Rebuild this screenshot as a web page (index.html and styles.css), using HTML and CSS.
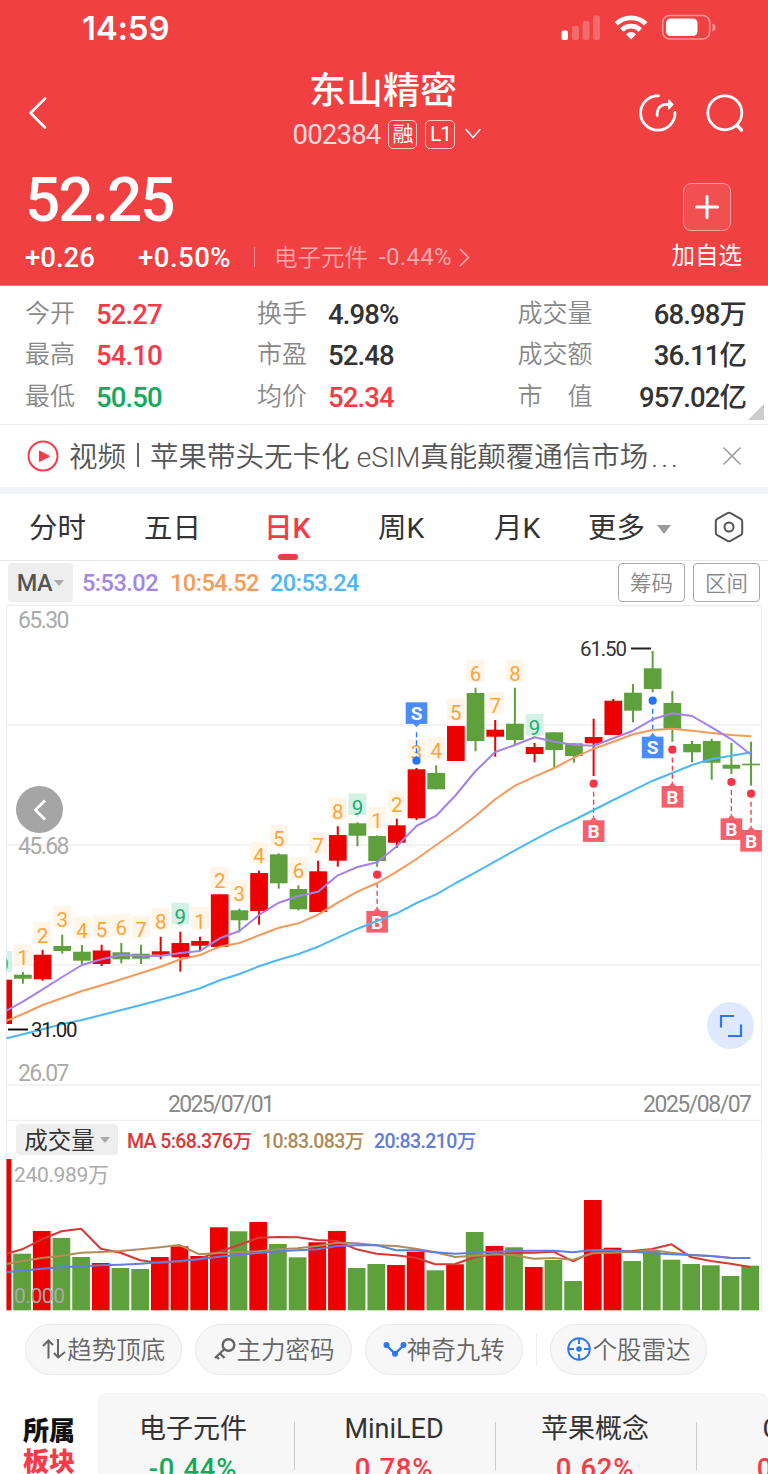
FILE: index.html
```html
<!DOCTYPE html>
<html lang="zh-CN">
<head>
    <meta charset="utf-8">
    <meta name="viewport" content="width=device-width, initial-scale=1.0">

    <title>东山精密 002384</title>

    <link rel="stylesheet" href="styles.css">
</head>
<body>
    <header class="top">
        <div class="status">
            <span class="time">14:59</span>
            <svg class="status-icons" width="156" height="28" viewBox="0 0 156 28">
                <rect x="1.500" y="16.500" width="6.500" height="9.500" rx="2" fill="#fff"/>
                <g fill="#fff" opacity=".22">
                    <rect x="12" y="12" width="7" height="14" rx="2"/>
                    <rect x="22.500" y="7" width="7" height="19" rx="2"/>
                    <rect x="33" y="1.500" width="7" height="24.500" rx="2"/>
                </g>
                <g fill="none" stroke="#fff" stroke-width="4.800">
                    <path d="M56.200 9.700a21.500 21.500 0 0 1 29.600 0"/>
                    <path d="M61.700 16a13.300 13.300 0 0 1 18.600 0"/>
                </g>
                <path d="M71 25.500l-5-5.300a7 7 0 0 1 10 0z" fill="#fff"/>
                <rect x="102.700" y="1.500" width="47" height="23.500" rx="7" fill="none" stroke="#fff" stroke-width="1.600" opacity=".45"/>
                <rect x="106" y="4.500" width="31.500" height="17.500" rx="4.500" fill="#fff"/>
                <path d="M152.500 9.500q3 1 3 4t-3 4z" fill="#fff" opacity=".45"/>
            </svg>
        </div>

        <div class="title-bar">
            <svg class="back" width="20" height="34" viewBox="0 0 20 34" fill="none" stroke="#fff" stroke-width="2.600" stroke-linecap="round" stroke-linejoin="round">
                <path d="M17 2.500L2.500 17 17 31.500"/>
            </svg>
            <div class="title">
                <h1>东山精密</h1>
                <div class="code">
                    <span>002384</span>
                    <b>融</b>
                    <b class="level">L1</b>
                    <svg width="16" height="12" viewBox="0 0 16 12" fill="none" stroke="#fff" stroke-width="1.600" stroke-linecap="round">
                        <path d="M1 1.500l7 8 7-8"/>
                    </svg>
                </div>
            </div>
            <div class="actions">
                <svg width="40" height="40" viewBox="0 0 40 40" fill="none" stroke="#fff" stroke-width="2.800" stroke-linecap="round">
                    <path d="M20.500 2.800A17.200 17.200 0 1 0 37 19.500"/>
                    <path d="M19.200 22.500v-2.500a8.500 8.500 0 0 1 8.500-8.500h5"/>
                    <path d="M30.800 7.300l4 4.200-4 4.200z" fill="#fff" stroke-width="1.500" stroke-linejoin="round"/>
                </svg>
                <svg width="40" height="40" viewBox="0 0 40 40" fill="none" stroke="#fff" stroke-width="2.800" stroke-linecap="round">
                    <circle cx="19.800" cy="19.800" r="17"/>
                    <path d="M32 32.500l4.500 4.500" stroke-width="3.500"/>
                </svg>
            </div>
        </div>

        <div class="quote">
            <div>
                <div class="price">52.25</div>
                <div class="change">
                    <span class="diff">+0.26</span>
                    <span class="rate">+0.50%</span>
                    <i></i>
                    <span class="sector">电子元件</span>
                    <span class="sector-rate">-0.44%</span>
                    <svg width="11" height="19" viewBox="0 0 11 19" fill="none" stroke="#f9a9aa" stroke-width="1.700">
                        <path d="M1 1l8.500 8.500L1 18"/>
                    </svg>
                </div>
            </div>
            <div class="add">
                <div class="add-box">
                    <svg width="24" height="24" viewBox="0 0 24 24" stroke="#fff" stroke-width="3" stroke-linecap="round">
                        <path d="M12 1.500v21M1.500 12h21"/>
                    </svg>
                </div>
                <span>加自选</span>
            </div>
        </div>
    </header>

    <section class="stats">
        <dl class="col first">
            <dt>今开</dt><dd class="up">52.27</dd>
            <dt>最高</dt><dd class="up">54.10</dd>
            <dt>最低</dt><dd class="down">50.50</dd>
        </dl>
        <dl class="col second">
            <dt>换手</dt><dd>4.98%</dd>
            <dt>市盈</dt><dd>52.48</dd>
            <dt>均价</dt><dd class="up">52.34</dd>
        </dl>
        <dl class="col third">
            <dt>成交量</dt><dd>68.98万</dd>
            <dt>成交额</dt><dd>36.11亿</dd>
            <dt>市　值</dt><dd>957.02亿</dd>
        </dl>
        <div class="corner"></div>
    </section>

    <section class="news">
        <svg width="32" height="32" viewBox="0 0 32 32">
            <circle cx="16" cy="16" r="14.500" fill="none" stroke="#f83a48" stroke-width="2"/>
            <path d="M12.500 11v10.500l10-5.200z" fill="#f83a48" stroke="#f83a48" stroke-linejoin="round"/>
        </svg>
        <p><span>视频</span><i></i><span>苹果带头无卡化 eSIM真能颠覆通信市场<span class="dots">...</span></span></p>
        <svg width="20" height="20" viewBox="0 0 20 20" stroke="#999" stroke-width="1.500">
            <path d="M1.500 1.500l17 17M18.500 1.500l-17 17"/>
        </svg>
    </section>

    <nav class="tabs">
        <a>分时</a>
        <a>五日</a>
        <a class="active">日K</a>
        <a>周K</a>
        <a>月K</a>
        <a class="more">更多</a>
        <svg width="30" height="32" viewBox="0 0 30 32" fill="none" stroke="#555" stroke-width="2" stroke-linejoin="round">
            <path d="M13.500 2.200q1.500-.8 3 0l10.200 5.600q1.500.9 1.500 2.500v11.400q0 1.600-1.500 2.500l-10.200 5.600q-1.500.8-3 0L3.300 24.200q-1.500-.9-1.500-2.500V10.300q0-1.600 1.500-2.500z"/>
            <circle cx="15" cy="16" r="4.500"/>
        </svg>
    </nav>

    <div class="indicators">
        <span class="picker">MA</span>
        <span class="ma5">5:53.02</span>
        <span class="ma10">10:54.52</span>
        <span class="ma20">20:53.24</span>
        <div class="buttons">
            <button>筹码</button>
            <button>区间</button>
        </div>
    </div>

    <div class="chart">
        <svg id="kline" width="768" height="517" viewBox="0 604 768 517"></svg>
        <div class="prev">
            <svg width="14" height="22" viewBox="0 0 14 22" fill="none" stroke="#fff" stroke-width="2.800">
                <path d="M12 1.500L2.500 11 12 20.500"/>
            </svg>
        </div>
        <div class="expand">
            <svg width="24" height="24" viewBox="0 0 24 24" fill="none" stroke="#2f74f5" stroke-width="2.200">
                <path d="M2 13.500V2h13M22 10.500V22H9"/>
            </svg>
        </div>
    </div>

    <div class="indicators volume-head">
        <span class="picker">成交量</span>
        <span class="vol5">MA 5:68.376万</span>
        <span class="vol10">10:83.083万</span>
        <span class="vol20">20:83.210万</span>
    </div>
    <svg id="volume" width="768" height="153" viewBox="0 1158 768 153"></svg>

    <div class="pills">
        <a>
            <svg width="26" height="24" viewBox="0 0 26 24" fill="none" stroke="#666" stroke-width="2">
                <path d="M7.500 21.500V4M2 9l5.500-5.500L12 8M17 2v18.500M13 16l4.200 4.500 6.800-5.500"/>
            </svg>趋势顶底
        </a>
        <a>
            <svg width="24" height="24" viewBox="0 0 24 24" fill="none" stroke="#666" stroke-width="2.400">
                <circle cx="15.500" cy="8" r="5.800"/>
                <path d="M11.500 12L2 21M7 16.500l4.500 4.500M3.500 19.500l2.500 2.500"/>
            </svg>主力密码
        </a>
        <a>
            <svg width="24" height="24" viewBox="0 0 24 24" fill="#2b77f6" stroke="#2b77f6" stroke-width="2.400">
                <path d="M3.500 8.500l8.500 8 8.500-8" fill="none"/>
                <circle cx="3.500" cy="8" r="1.800"/>
                <circle cx="12" cy="16.800" r="1.800"/>
                <circle cx="20.500" cy="8" r="1.800"/>
            </svg>神奇九转
        </a>
        <i></i>
        <a>
            <svg width="26" height="24" viewBox="0 0 26 24" fill="none" stroke="#2b77f6" stroke-width="1.900">
                <circle cx="13" cy="12" r="10.800"/>
                <path d="M13 1v6M13 17v6M2 12h6M18 12h6"/>
                <circle cx="13" cy="12" r="1.800" fill="#2b77f6"/>
            </svg>个股雷达
        </a>
    </div>

    <section class="plates">
        <h2>所属<em>板块</em></h2>
        <div class="plate-list">
            <div><span>电子元件</span><b class="down">-0.44%</b></div>
            <div><span>MiniLED</span><b class="up">0.78%</b></div>
            <div><span>苹果概念</span><b class="up">0.62%</b></div>
            <div><span>CPO</span><b class="up">0.55%</b></div>
        </div>
    </section>

    <script src="chart.js"></script>
</body>
</html>
```
FILE: styles.css
```css
* {
    box-sizing: border-box;
}

html,
body {
    margin: 0;
    height: 1474px;
    overflow: hidden;
}

body {
    width: 768px;
    background: white;
    color: #333;
    font-family: Roboto, "Noto Sans CJK SC", sans-serif;
    font-size: 24px;
}

svg {
    display: block;
    flex: none;
}

h1, h2, p, dl, dt, dd {
    margin: 0;
}

.up {
    color: #f83a48;
}

.down {
    color: #14aa5c;
}

/* header */

.top {
    height: 286px;
    background: #f04042;
    border-bottom: 1px solid #de8184;
    color: white;
}

.status {
    display: flex;
    justify-content: space-between;
    align-items: center;
    height: 56px;
    padding: 0 52px 0 82px;
}

.time {
    font-family: Inter, sans-serif;
    font-weight: 600;
    font-size: 33px;
    letter-spacing: -0.2px;
}

.title-bar {
    display: flex;
    justify-content: space-between;
    height: 112px;
    padding: 0 23px 0 28px;
}

.back {
    margin-top: 40px;
}

.title {
    padding: 13px 0 0 88px;
    text-align: center;
}

.title h1 {
    padding-right: 8px;
    font-weight: 500;
    font-size: 37px;
    line-height: 46px;
}

.code {
    display: flex;
    justify-content: center;
    align-items: center;
    gap: 8px;
    margin-top: 4px;
    height: 30px;
    font-size: 27.5px;
}

.code span {
    letter-spacing: -0.8px;
    opacity: .8;
}

.code b {
    width: 29px;
    height: 29px;
    border: 1.5px solid rgba(255, 255, 255, .7);
    border-radius: 5px;
    font-weight: 400;
    font-size: 21px;
    line-height: 26px;
}

.code .level {
    width: 30px;
    letter-spacing: -1px;
}

.code svg {
    margin-left: 2px;
}

.actions {
    display: flex;
    gap: 27px;
    padding-top: 37px;
}

.quote {
    display: flex;
    justify-content: space-between;
    padding: 0 26px 0 25px;
}

.price {
    height: 63px;
    font-weight: 500;
    font-size: 62px;
    line-height: 64px;
    letter-spacing: -1.9px;
}

.change {
    display: flex;
    align-items: center;
    height: 34px;
    margin-top: 9px;
    font-size: 27.5px;
}

.diff {
    width: 113px;
    font-weight: 500;
}

.rate {
    width: 116px;
    font-weight: 500;
    letter-spacing: 0.5px;
}

.change i {
    width: 1px;
    height: 20px;
    margin-right: 19px;
    background: #f68e8f;
}

.sector {
    margin-top: -3px;
    color: #f9a9aa;
    font-weight: 350;
    font-size: 23.5px;
}

.sector-rate {
    margin: 0 7px 0 11px;
    color: #f9a9aa;
    font-size: 24px;
    letter-spacing: 0.3px;
}

.add {
    padding-top: 15px;
    text-align: center;
    font-size: 23.5px;
    line-height: 34px;
}

.add-box {
    display: flex;
    justify-content: center;
    align-items: center;
    width: 48px;
    height: 48px;
    margin: 0 auto 8px;
    border: 1px solid #f8a0a1;
    border-radius: 8px;
    background: #f24f51;
}

/* numbers under the header */

.stats {
    position: relative;
    display: flex;
    height: 139px;
    padding: 8px 22px 0 25px;
    border-bottom: 1.5px solid #ebebeb;
}

.col {
    display: grid;
    grid-template-columns: 71px auto;
    grid-auto-rows: 41.3px;
    align-content: start;
    line-height: 41px;
}

.first {
    width: 232px;
}

.second {
    width: 260.5px;
}

.third {
    flex: 1;
    grid-template-columns: 90px 1fr;
}

.third dd {
    text-align: right;
}

.stats dt {
    color: #888;
    font-weight: 350;
    font-size: 25px;
    line-height: 40px;
}

.stats dd {
    font-weight: 500;
    font-size: 27.5px;
    letter-spacing: -0.9px;
    white-space: nowrap;
}

.corner {
    position: absolute;
    right: 4px;
    bottom: 4px;
    border-left: 16px solid transparent;
    border-bottom: 16px solid #ccc;
}

.news {
    display: flex;
    align-items: center;
    height: 62px;
    padding: 0 26px 1px 27px;
    color: #555;
}

.news p {
    display: flex;
    align-items: center;
    flex: 1;
    margin: -3px 0 0 10px;
    font-weight: 350;
    font-size: 28.5px;
    white-space: nowrap;
}

.news i {
    width: 2px;
    height: 24px;
    margin: 2px 11px 0;
    background: #666;
}

.dots {
    margin-left: 3px;
    letter-spacing: 3px;
}

/* tabs */

.tabs {
    display: grid;
    grid-template-columns: 115px 115px 114px 116px 99px 126px auto;
    align-items: center;
    height: 74px;
    padding: 0 0 0 29px;
    border-top: 7px solid #f2f4f9;
    border-bottom: 1.5px solid #e8e8e8;
    font-size: 28.5px;
}

.tabs a {
    position: relative;
    height: 66px;
    line-height: 70px;
    white-space: nowrap;
}

.tabs a:nth-child(3),
.tabs a:nth-child(4),
.tabs a:nth-child(5) {
    padding-left: 5px;
}

.tabs .active {
    color: #f83a48;
    font-weight: 500;
}

.active::after {
    content: "";
    position: absolute;
    left: 19px;
    bottom: 0;
    width: 20px;
    height: 6px;
    border-radius: 3px;
    background: #f83a48;
}

.more::after {
    content: "";
    display: inline-block;
    margin: 0 0 4px 12px;
    border: 7px solid transparent;
    border-top: 9px solid #999;
    border-bottom: 0;
}

.indicators {
    display: flex;
    align-items: center;
    height: 43px;
    padding: 0 8px;
    font-weight: 500;
    font-size: 23.5px;
    letter-spacing: -0.5px;
    white-space: nowrap;
}

.picker {
    display: flex;
    align-items: center;
    justify-content: center;
    width: 65px;
    height: 39px;
    margin-right: 9px;
    border-radius: 4px;
    background: #eee;
    color: #555;
}

.picker::after {
    content: "";
    margin-left: 2px;
    border: 5px solid transparent;
    border-top: 6px solid #aaa;
    border-bottom: 0;
}

.ma5 {
    width: 88px;
    color: #a286ea;
}

.ma10 {
    width: 100px;
    color: #f99a57;
}

.ma20 {
    color: #4cb6f8;
}

.buttons {
    display: flex;
    gap: 8px;
    margin-left: auto;
}

.buttons button {
    width: 67px;
    height: 39px;
    padding: 0 0 2px;
    border: 1.5px solid #aaa;
    border-radius: 4px;
    background: white;
    color: #888;
    font: 350 21.5px "Noto Sans CJK SC", sans-serif;
}

/* charts */

.chart {
    position: relative;
}

.chart text,
#volume text {
    font-family: Roboto, "Noto Sans CJK SC", sans-serif;
}

.prev,
.expand {
    position: absolute;
    display: flex;
    align-items: center;
    justify-content: center;
    width: 47px;
    height: 47px;
    border-radius: 50%;
}

.prev {
    left: 16px;
    top: 182px;
    background: #a5a5a5;
}

.expand {
    right: 14px;
    top: 398px;
    background: #dfe9fe;
}

.volume-head {
    height: 37px;
    margin: 0 6px;
    padding: 0 9px;
    border: solid #eee;
    border-width: 0 1px;
    font-size: 19.5px;
    letter-spacing: -0.6px;
}

.volume-head .picker {
    width: 102px;
    height: 31px;
    padding-bottom: 2px;
    color: #333;
    font-weight: 400;
    font-size: 23.5px;
    letter-spacing: 0;
}

.volume-head .picker::after {
    margin: 3px 0 0 5px;
}

.vol5 {
    width: 135px;
    color: #d93838;
}

.vol10 {
    width: 112px;
    color: #ad8a55;
}

.vol20 {
    color: #5f7cd8;
}

.pills {
    display: flex;
    align-items: center;
    gap: 12.5px;
    height: 51px;
    margin: 13px 0 18px 24.5px;
}

.pills a {
    display: flex;
    align-items: center;
    justify-content: center;
    width: 157.7px;
    height: 51px;
    padding-bottom: 2px;
    border: 1px solid #e9e9e9;
    border-radius: 26px;
    background: #f7f7f7;
    color: #666;
    font-weight: 350;
    font-size: 24.5px;
}

.pills i {
    width: 1px;
    height: 32px;
    margin-left: 1px;
    background: #eee;
}

.plates {
    display: flex;
    height: 90px;
}

.plates h2 {
    width: 98px;
    padding: 23px 0 0 23px;
    color: #111;
    font-weight: 900;
    font-size: 26px;
    line-height: 31px;
}

.plates em {
    display: block;
    color: #f83a48;
    font-style: normal;
}

.plate-list {
    display: flex;
    flex: none;
    width: 670px;
    overflow: hidden;
    border-radius: 8px 8px 0 0;
    background: #f7f7f7;
}

.plate-list div {
    position: relative;
    flex: none;
    width: 201px;
    padding: 16px 3px 0 0;
    text-align: center;
    font-size: 27px;
    line-height: 41px;
    white-space: nowrap;
}

.plate-list div:first-child {
    width: 197px;
    padding-right: 7px;
}

.plate-list div:last-child span {
    margin-left: -14px;
}

.plate-list div:not(:last-child)::after {
    content: "";
    position: absolute;
    right: 0;
    top: 29px;
    width: 1px;
    height: 48px;
    background: #ccc;
}

.plate-list b {
    display: block;
    margin-top: -2px;
    font-weight: 500;
    font-size: 27.5px;
    letter-spacing: 0.7px;
}
```
FILE: chart.js
```js
const RED = '#ec0000';
const GREEN = '#5ea03b';
const STEP = 19.68;

// direction, body top, body bottom, wick top, wick bottom
const candles = [
    ['r', 979.7, 1024, 979.7, 1024],
    ['g', 974.7, 978.7, 972, 983.7],
    ['r', 954.7, 979.3, 950, 980.7],
    ['g', 946, 951, 934.7, 953.7],
    ['g', 951.7, 960.7, 945, 964.3],
    ['r', 950.5, 964, 944.7, 966],
    ['g', 952.3, 959.3, 943, 963.3],
    ['g', 953.7, 958.7, 944.7, 964],
    ['r', 951.3, 954.7, 936.7, 959.3],
    ['r', 943, 957.3, 931.7, 971.7],
    ['r', 941, 945.7, 936.7, 950.7],
    ['r', 894.3, 947, 894.3, 947],
    ['g', 910.3, 920.3, 908.7, 932.3],
    ['r', 873, 911, 870.7, 924.7],
    ['g', 854.3, 883.3, 853.3, 888.7],
    ['g', 889, 909.3, 885.3, 910.3],
    ['r', 871.3, 912, 860.7, 912],
    ['r', 835, 860.7, 826.3, 866.7],
    ['g', 823.3, 835.7, 822.3, 846.3],
    ['g', 836, 861, 835.3, 866.7],
    ['r', 825.3, 842.7, 818.7, 848],
    ['r', 769.3, 818.3, 768, 820],
    ['g', 773, 789.3, 765.3, 789.3],
    ['r', 726, 761, 726, 761],
    ['g', 693, 741, 687.7, 751.3],
    ['r', 729.7, 736.7, 720, 756.7],
    ['g', 723.7, 740, 687.7, 745.7],
    ['r', 747, 754, 743, 762.3],
    ['g', 732.3, 750, 732, 767.7],
    ['g', 743.3, 756, 743.3, 762.7],
    ['r', 737, 743.3, 718.7, 776],
    ['r', 700.7, 735, 699, 735],
    ['g', 692.7, 710.7, 684, 722.3],
    ['g', 668.3, 689, 651, 692.3],
    ['g', 703, 728.7, 691, 741.7],
    ['g', 744, 752.3, 741, 762.3],
    ['g', 741, 762.7, 738.7, 779.7],
    ['g', 764.7, 768.7, 743, 774],
    ['g', 763.7, 765.3, 741.7, 785.7]
];

const ma5 = [1010.7, 1001.7, 989.3, 977, 965, 959.3, 955, 955.7, 956, 953, 951, 938.3, 931, 915, 902.7, 896, 891.7, 875.3, 867, 862.3, 846.3, 826, 815.7, 795, 771, 752, 745, 737.3, 741.7, 744.7, 745.7, 738.3, 730.7, 719.3, 713.3, 716, 727.3, 739.3, 754.7];
const ma10 = [1020.7, 1014, 1005, 998, 991, 985.3, 979.3, 973, 966.7, 959.3, 955, 946.7, 943, 935.3, 927.7, 923.3, 914.7, 902.7, 891.7, 883, 871.7, 859, 845, 831, 816, 799.3, 785.7, 776.7, 768, 757.7, 748.7, 741.7, 734.3, 730, 728.7, 730.7, 733, 735, 736.3];
const ma20 = [1038.3, 1034.3, 1029.3, 1024, 1020, 1015, 1010, 1005, 999.7, 994.3, 988.3, 980.3, 974, 966.3, 959.7, 954, 946.7, 937.7, 928.7, 921, 913.3, 903, 894.3, 883, 872.3, 861.3, 850.3, 839.7, 829.3, 820, 810, 800, 790.3, 780.7, 773, 765, 759, 755.7, 752.3];

// nine-turn counters: digit and its vertical centre
const turns = [
    [9, 965], [1, 957.5], [2, 935.5], [3, 919.7], [4, 930.7], [5, 929.7], [6, 928], [7, 929.7], [8, 921.7], [9, 916.7],
    [1, 921.3], [2, 880.7], [3, 893.7], [4, 856], [5, 838.7], [6, 871], [7, 846], [8, 811.5], [9, 807.5],
    [1, 821], [2, 804.5], [3, 752.7], [4, 750.7], [5, 712.3], [6, 673.5], [7, 705.5], [8, 673.5], [9, 728]
];

// candle index, letter, dot y, box top
const marks = [
    [21, 'S', 760.7, 702.3],
    [19, 'B', 874.7, 911],
    [30, 'B', 783.7, 820.3],
    [33, 'S', 700.7, 736.7],
    [34, 'B', 749.7, 786],
    [37, 'B', 782, 818.3],
    [38, 'B', 793.7, 830]
];

const volumes = [1159, 1253.7, 1231, 1238, 1257, 1263, 1268, 1269, 1257, 1246.3, 1256, 1227.3, 1231.3, 1222, 1244, 1257.3, 1242.3, 1231, 1268, 1264, 1265, 1251.7, 1270.3, 1264.3, 1232, 1246, 1247.3, 1267, 1260, 1281, 1200, 1247.7, 1261, 1251, 1259.7, 1264, 1265.3, 1276, 1265.7];
const vol5 = [1253.7, 1249.3, 1239.3, 1231.3, 1228.7, 1248.7, 1252.7, 1260.3, 1263, 1261.7, 1258.7, 1251.7, 1245.3, 1237.7, 1237, 1237.3, 1240, 1241, 1249.3, 1253.7, 1255.3, 1257.7, 1264.3, 1264, 1257.3, 1254, 1253, 1252.7, 1251.7, 1261.3, 1251.7, 1252.3, 1251, 1249, 1244.3, 1257.3, 1261, 1263.7, 1267];
const vol10 = [1264, 1261, 1258, 1255.7, 1252.7, 1252, 1251, 1249.3, 1247.3, 1245, 1254.3, 1253, 1252, 1251.3, 1249.3, 1248.3, 1246, 1242.7, 1243.3, 1245.3, 1246, 1248.7, 1252.3, 1257, 1255.7, 1254.3, 1255.3, 1258.7, 1258, 1259.7, 1253.3, 1252.7, 1252, 1250, 1252.7, 1255, 1256, 1257.7, 1258];
const vol20 = [1272.3, 1270.7, 1268.7, 1267.3, 1266.3, 1265.3, 1264.7, 1263.7, 1262.3, 1261, 1259.3, 1256.7, 1254.7, 1253, 1251.3, 1250.3, 1249.3, 1246, 1245.3, 1245, 1250.3, 1250.3, 1252.3, 1253.7, 1252.7, 1251.7, 1251, 1250.7, 1250.7, 1252.3, 1250, 1250.3, 1251.7, 1253.3, 1254.3, 1255, 1256, 1258, 1258];

function x(i) {
    return 22.9 + STEP * (i - 1);
}

function rect(left, top, width, height, fill) {
    // nothing is drawn left of the frame
    const l = Math.max(left, 6.5);
    return `<rect x="${l}" y="${top}" width="${left + width - l}" height="${height}" fill="${fill}"/>`;
}

function text(left, y, size, fill, value, length) {
    return `<text x="${left}" y="${y}" font-size="${size}" fill="${fill}" textLength="${length}">${value}</text>`;
}

function line(values, color, shift = 0) {
    const points = values.map((y, i) => `${Math.max(x(i) + shift, 6.5)},${y}`).join(' ');
    return `<polyline points="${points}" fill="none" stroke="${color}" stroke-width="2" stroke-linejoin="round"/>`;
}

function frame(ys, top, bottom) {
    return `<path d="${ys.map(y => `M6.5 ${y}H761.5`).join('')}M6.5 ${top}V${bottom}M761.5 ${top}V${bottom}" fill="none" stroke="#eee" stroke-width="1.300"/>`;
}

function candle([dir, top, bottom, high, low], i) {
    const fill = dir === 'r' ? RED : GREEN;
    const wick = i ? rect(x(i) - 1, high, 2, low - high, fill) : '';
    return rect(x(i) - 8.85, top, 17.7, bottom - top, fill) + wick;
}

function turn([n, y], i) {
    const c = x(i);
    const [bg, fill] = n === 9 ? ['#d3f1e4', '#20ad70'] : ['#fff5e8', '#f9a53a'];
    return `<path d="M${c - 9} ${y - 14}H${c + 9}V${y + 7.5}H${c + 3}l-3 3-3-3H${c - 9}z" fill="${bg}"/>`
        + `<text x="${c}" y="${y + 7.3}" font-size="20.500" fill="${fill}" text-anchor="middle">${n}</text>`;
}

function mark([i, letter, dot, top]) {
    const c = x(i);
    const above = top < dot;
    const color = letter === 'S' ? '#4a8cff' : '#f85f6b';
    const dotColor = letter === 'S' ? '#2277ff' : '#f83545';
    const tip = above ? `M${c - 4} ${top + 21}l4 4 4-4z` : `M${c - 4} ${top + .5}l4-4 4 4z`;
    const dash = above ? `M${c} ${top + 30}V${dot - 3}` : `M${c} ${dot + 8}V${top - 3}`;
    return `<path d="${dash}" stroke="${dotColor}" stroke-width="1.300" stroke-dasharray="5 3"/>`
        + `<circle cx="${c}" cy="${dot}" r="4.100" fill="${dotColor}"/>`
        + `<path d="${tip}" fill="${color}"/>`
        + rect(c - 10.8, top, 21.6, 21.6, color)
        + `<text x="${c}" y="${top + 17.6}" font-size="19" font-weight="700" fill="#fff" text-anchor="middle">${letter}</text>`;
}

document.querySelector('#kline').innerHTML = [
    '<clipPath id="inside"><rect x="6.5" y="604" width="755" height="517"/></clipPath>',
    frame([605.5, 725, 845, 965, 1085, 1120.5], 605, 1121),
    text(18, 628, 23, '#aaa', '65.30', 51.5),
    text(18, 854, 23, '#aaa', '45.68', 51.5),
    text(18, 1080.5, 23, '#aaa', '26.07', 51.5),
    text(168, 1112, 23, '#888', '2025/07/01', 107),
    text(643, 1112, 23, '#888', '2025/08/07', 109),
    `<g clip-path="url(#inside)">${turns.map(turn).join('')}</g>`,
    candles.map(candle).join(''),
    marks.map(mark).join(''),
    line(ma20, '#4cb8f8'),
    line(ma10, '#f8995c'),
    line(ma5, '#a283ec'),
    rect(631, 647.5, 20, 2, '#222'),
    text(580, 656, 20.5, '#333', '61.50', 47),
    rect(8, 1028.5, 20, 2, '#111'),
    text(31, 1037, 20.5, '#222', '31.00', 46.5)
].join('');

document.querySelector('#volume').innerHTML = [
    frame([], 1158, 1311),
    volumes.map((top, i) => rect(x(i) - 9.7, top, 17.7, 1310.3 - top, candles[i][0] === 'r' ? RED : GREEN)).join(''),
    line(vol5, '#d93838', -.8),
    line(vol10, '#b08d57', -.8),
    line(vol20, '#5f7fe0', -.8),
    text(14, 1182, 21, '#aaa', '240.989万', 95),
    text(14, 1303, 21, '#aaa', '0.000', 51)
].join('');
```
